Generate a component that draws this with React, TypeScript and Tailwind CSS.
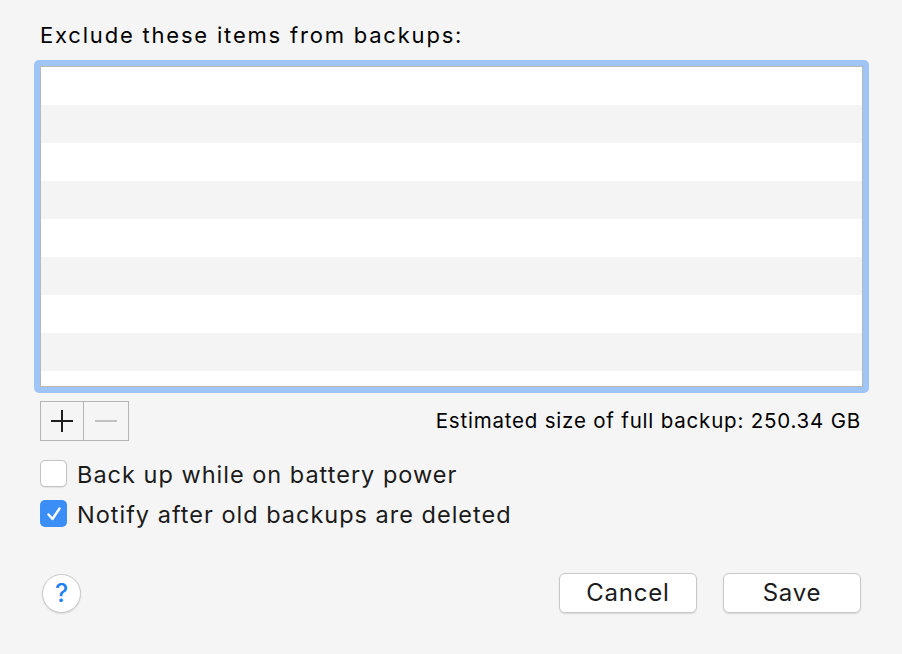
import React from 'react';

const rows = Array.from({ length: 9 }, (_, i) => i);

function Checkbox({ checked }: { checked: boolean }) {
  return checked ? (
    <div className="w-[27px] h-[27px] rounded-[5px] bg-[#3b8ef5] flex items-center justify-center">
      <svg width="20" height="20" viewBox="0 0 20 20">
        <path d="M4.5 10.5 L8.5 15 L15.5 4.5" fill="none" stroke="white" strokeWidth="2.4" strokeLinecap="round" strokeLinejoin="round" />
      </svg>
    </div>
  ) : (
    <div className="w-[27px] h-[27px] rounded-[5px] bg-white border border-[#c3c3c3] shadow-[0_0.5px_1px_rgba(0,0,0,0.08)]" />
  );
}

export default function App() {
  return (
    <div className="w-[902px] h-[654px] bg-[#f5f5f5] flex flex-col pl-[34px] pr-[33px] text-[#1b1b1b] font-['Inter',sans-serif]">
      {/* Title */}
      <div className="mt-[22px] pl-[6px] text-[22px] leading-[26px] tracking-[1.8px] text-black">Exclude these items from backups:</div>

      {/* Exclusion list with focus ring */}
      <div className="mt-[12px] h-[333px] border-[6px] border-[#9ec5f5] rounded-[5px]">
        <div className="h-full border border-[#b8b8b8] bg-white overflow-hidden">
          {rows.map((i) => (
            <div key={i} className={i % 2 === 0 ? 'h-[38px] bg-white' : 'h-[38px] bg-[#f4f4f4]'} />
          ))}
        </div>
      </div>

      {/* Add / remove and size */}
      <div className="mt-[8px] h-[40px] flex items-center justify-between pl-[6px] pr-[8px]">
        <div className="flex h-[40px] border border-[#b4b4b4]">
          <div className="w-[43px] h-full border-r border-[#b4b4b4] flex items-center justify-center">
            <svg width="24" height="24" viewBox="0 0 24 24">
              <path d="M12 1 V23 M1 12 H23" stroke="#1e1e1e" strokeWidth="2" />
            </svg>
          </div>
          <div className="w-[44px] h-full flex items-center justify-center">
            <svg width="24" height="24" viewBox="0 0 24 24">
              <path d="M1 12 H23" stroke="#c2c2c2" strokeWidth="2" />
            </svg>
          </div>
        </div>
        <div className="text-[20.5px] leading-[24px] tracking-[0.8px] text-black">Estimated size of full backup: 250.34 GB</div>
      </div>

      {/* Options */}
      <div className="mt-[19px] pl-[6px] flex flex-col gap-[13px]">
        <div className="flex items-center gap-[10px] h-[27px]">
          <Checkbox checked={false} />
          <span className="text-[23.5px] leading-[28px] tracking-[1px] mt-[3px]">Back up while on battery power</span>
        </div>
        <div className="flex items-center gap-[10px] h-[27px]">
          <Checkbox checked />
          <span className="text-[23.5px] leading-[28px] tracking-[1px] mt-[3px]">Notify after old backups are deleted</span>
        </div>
      </div>

      {/* Footer */}
      <div className="mt-[46px] h-[40px] flex items-center pl-[8px] pr-[8px]">
        <div className="w-[39px] h-[39px] rounded-full bg-white border border-[#c9c9c9] shadow-[0_1px_1.5px_rgba(0,0,0,0.12)] flex items-center justify-center text-[#1f7ff5] text-[25px] font-medium leading-none">
          ?
        </div>
        <div className="ml-auto flex gap-[26px]">
          <button className="w-[138px] h-[40px] rounded-[6px] bg-white border border-[#c8c8c8] shadow-[0_1px_1.5px_rgba(0,0,0,0.12)] text-[24px] leading-none tracking-[0.8px] text-[#1b1b1b]">
            Cancel
          </button>
          <button className="w-[138px] h-[40px] rounded-[6px] bg-white border border-[#c8c8c8] shadow-[0_1px_1.5px_rgba(0,0,0,0.12)] text-[24px] leading-none tracking-[0.8px] text-[#1b1b1b]">
            Save
          </button>
        </div>
      </div>
    </div>
  );
}
